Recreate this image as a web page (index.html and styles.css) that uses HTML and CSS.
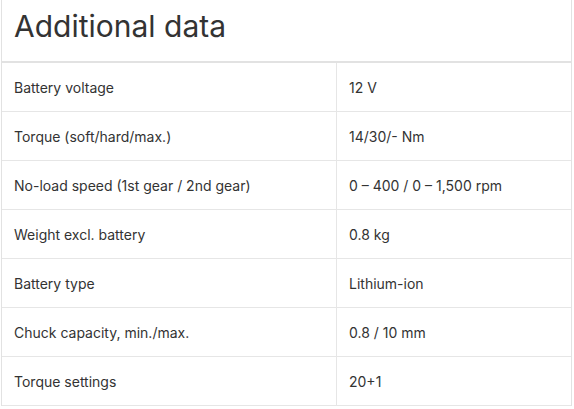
FILE: index.html
```html
<!DOCTYPE html>
<html>
<head>
<meta charset="utf-8">
<link rel="stylesheet" href="styles.css">
</head>
<body>
<div class="panel">
  <h2 class="title">Additional data</h2>
  <table class="data">
    <tr><td class="label">Battery voltage</td><td class="value">12 V</td></tr>
    <tr><td class="label">Torque (soft/hard/max.)</td><td class="value">14/30/- Nm</td></tr>
    <tr><td class="label">No-load speed (1st gear / 2nd gear)</td><td class="value">0 – 400 / 0 – 1,500 rpm</td></tr>
    <tr><td class="label">Weight excl. battery</td><td class="value">0.8 kg</td></tr>
    <tr><td class="label">Battery type</td><td class="value">Lithium-ion</td></tr>
    <tr><td class="label">Chuck capacity, min./max.</td><td class="value">0.8 / 10 mm</td></tr>
    <tr><td class="label">Torque settings</td><td class="value">20+1</td></tr>
  </table>
</div>
</body>
</html>
```
FILE: styles.css
```css
html, body {
  margin: 0;
  padding: 0;
  background: #fff;
}
body {
  font-family: Inter, Roboto, sans-serif;
  color: #333;
}
.panel {
  margin-left: 1px;
  width: 571px;
  border-left: 1px solid #e2e2e2;
  border-right: 1px solid #e2e2e2;
  box-sizing: border-box;
}
.title {
  margin: 0;
  height: 63px;
  box-sizing: border-box;
  padding: 8px 0 0 12px;
  font-size: 30px;
  font-weight: 400;
  line-height: 36px;
  color: #333;
  border-bottom: 2px solid #e2e2e2;
}
.data {
  width: 100%;
  border-collapse: collapse;
}
.data td {
  height: 48px;
  padding: 0 0 0 12px;
  font-size: 14px;
  border-bottom: 1px solid #e6e6e6;
  vertical-align: middle;
}
.label {
  width: 322px;
  border-right: 1px solid #e6e6e6;
}
```
